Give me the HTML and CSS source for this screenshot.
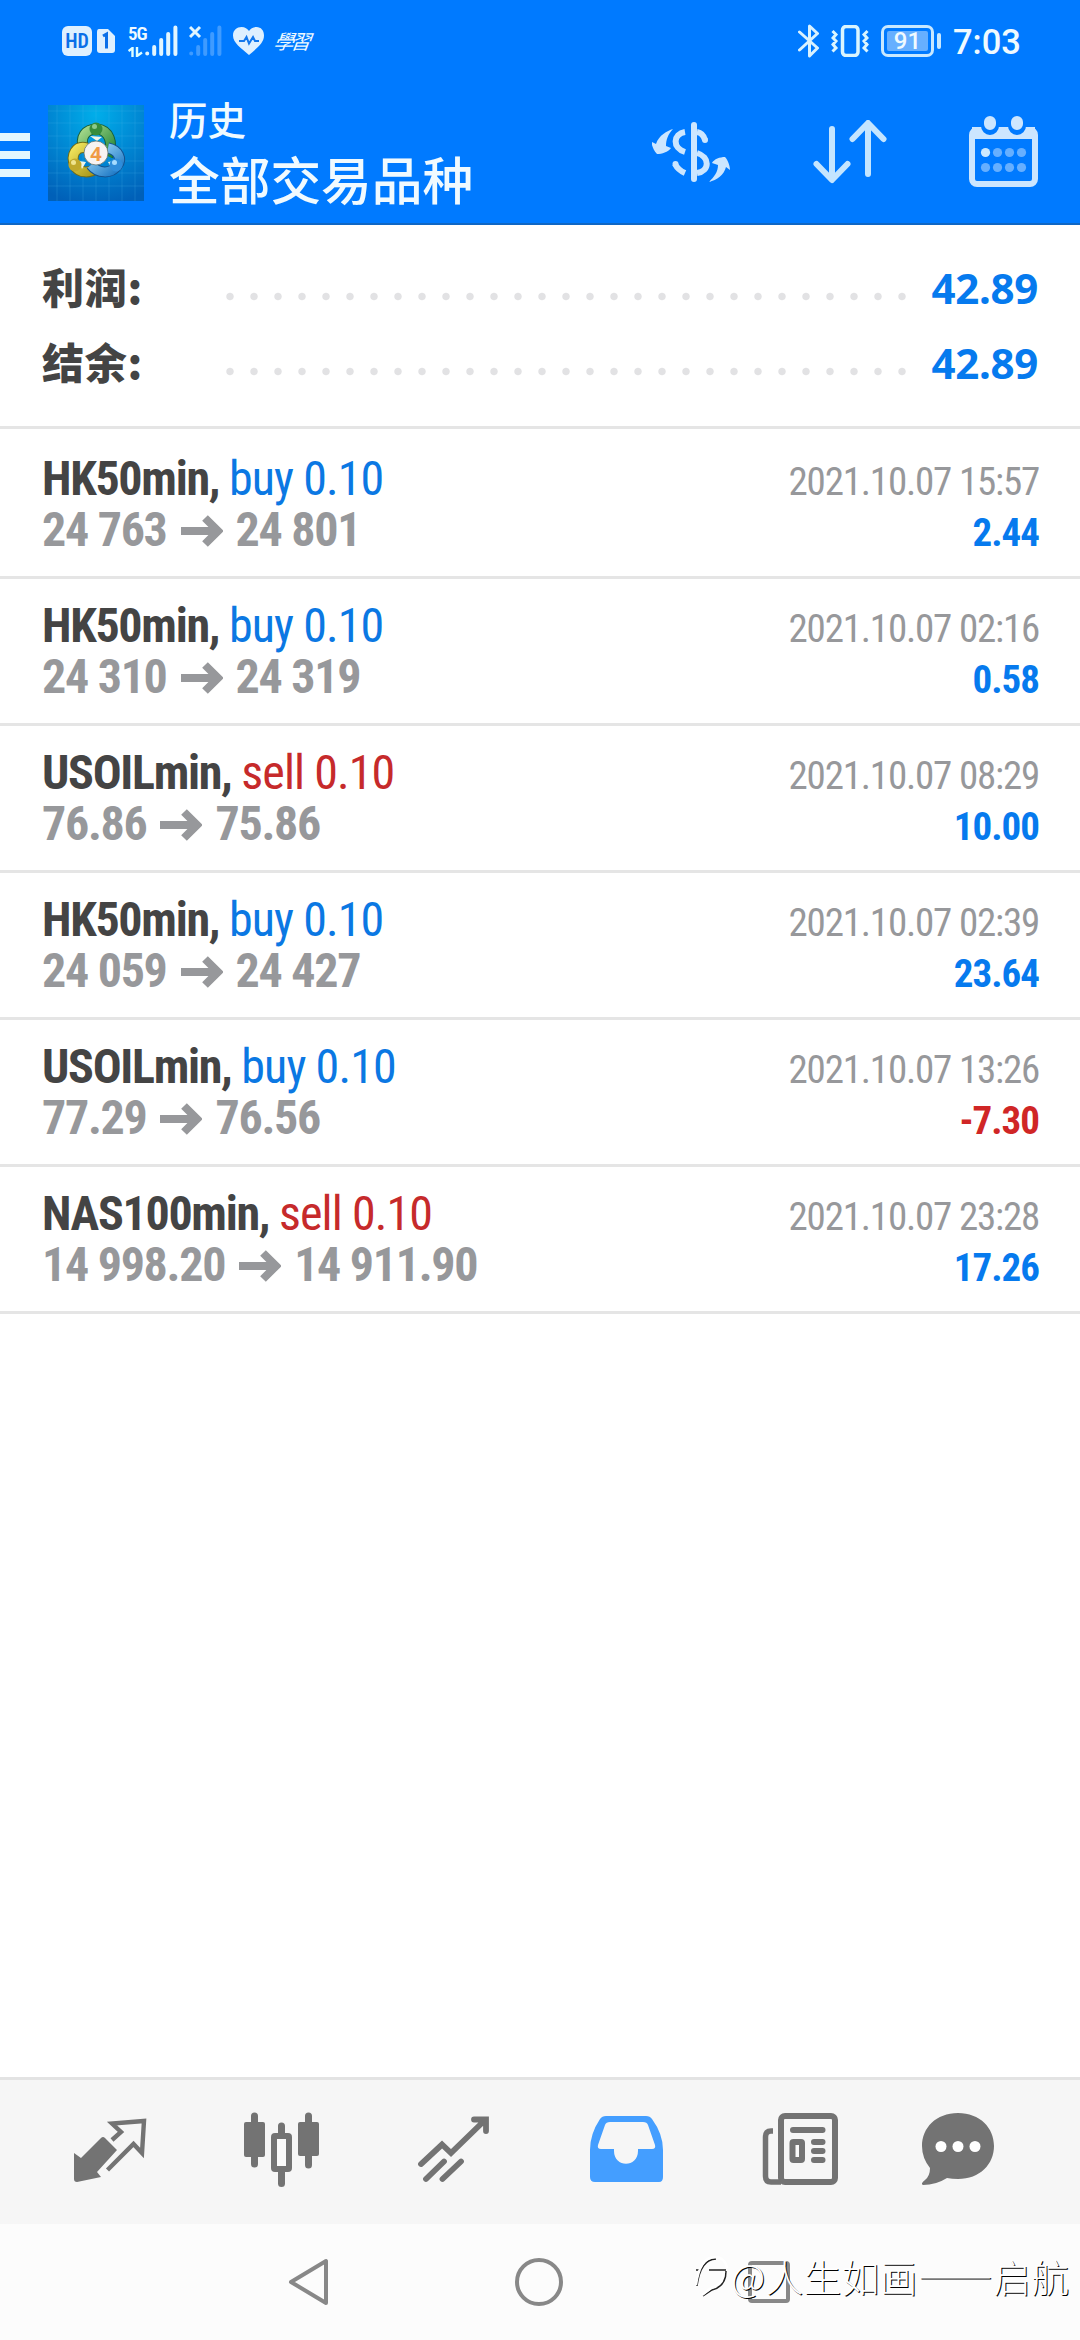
FILE: index.html
```html
<!DOCTYPE html>
<html lang="zh-CN">
<head>
<meta charset="utf-8">
<title>历史</title>
<link rel="stylesheet" href="styles.css">
</head>
<body>
<div class="screen">
  <header class="header">
    <div class="status">
      <div class="status-left">
        <span class="hd">HD</span>
        <svg class="sim" width="18" height="24" viewBox="0 0 18 24"><path d="M2 0H11L18 7V21Q18 24 15 24H3Q0 24 0 21V3Q0 0 2 0Z" fill="#def0ff"/><path d="M6 7L9.500 5V19.500" fill="none" stroke="#0a6fe8" stroke-width="3"/></svg>
        <span class="net">
          <span class="net-label">5G</span>
          <svg width="15" height="10" viewBox="0 0 15 10"><path d="M0.500 4L4.500 1V10M9 0V9L14 5.500" fill="none" stroke="#dff" stroke-width="2.400"/></svg>
        </span>
        <svg class="bars" width="33" height="32" viewBox="0 0 33 32"><path d="M2.200 28.500V28.500M9.200 29V22M16.200 29V15M23.200 29V9M30.400 29V2.500" stroke="#e2f6ff" stroke-width="4" stroke-linecap="round"/></svg>
        <svg class="bars off" width="33" height="32" viewBox="0 0 33 32"><path d="M2.200 28.500V28.500M9.200 29V22M16.200 29V15M23.200 29V9M30.400 29V2.500" stroke="#3f9bff" stroke-width="4" stroke-linecap="round"/><path d="M1 2L11 12M11 2L1 12" stroke="#e2f6ff" stroke-width="3"/></svg>
        <svg class="heart" width="32" height="28" viewBox="0 0 32 28"><path d="M16 28C8 21 0 16 0 8.500C0 3 4 0 8.500 0C12 0 14.500 1.800 16 4C17.500 1.800 20 0 23.500 0C28 0 31 3.500 31 8.500C31 16 24 21 16 28Z" fill="#def0ff"/><path d="M6 14H11L13.500 10L16 16.500L20 10L22 14H26" fill="none" stroke="#1277ec" stroke-width="2"/></svg>
        <span class="study">學習</span>
      </div>
      <div class="status-right">
        <svg width="22" height="34" viewBox="0 0 22 34"><path d="M1.500 8L19.500 24L11.500 32V2L19.500 9.500L1.500 26" fill="none" stroke="#d9f2ff" stroke-width="3" stroke-linejoin="round" stroke-linecap="round"/></svg>
        <svg class="vibrate" width="38" height="32" viewBox="0 0 38 32"><rect x="11.500" y="1.500" width="15.500" height="29" rx="3.500" fill="none" stroke="#d9f5ff" stroke-width="3.500"/><path d="M1.500 6L5 9.500L2 13L5 16L2 19.500L5 23L1.500 26.500M36.500 6L33 9.500L36 13L33 16L36 19.500L33 23L36.500 26.500" fill="none" stroke="#d9f5ff" stroke-width="3"/></svg>
        <span class="battery"><span class="level">91</span></span><i class="tip"></i>
        <span class="clock">7:03</span>
      </div>
    </div>
    <div class="toolbar">
      <svg class="menu" width="30" height="46" viewBox="0 0 30 46"><path d="M0 5H30M0 23H30M0 41H30" stroke="#e2f7ff" stroke-width="8"/></svg>
      <svg class="logo" width="96" height="96" viewBox="0 0 96 96">
        <defs>
          <radialGradient id="bg" cx="50%" cy="10%" r="95%"><stop offset="0" stop-color="#00aeea"/><stop offset=".5" stop-color="#0087d3"/><stop offset="1" stop-color="#0060b8"/></radialGradient>
          <linearGradient id="gr" x1="0" y1="0" x2="1" y2="1"><stop offset="0" stop-color="#a5d98a"/><stop offset="1" stop-color="#238537"/></linearGradient>
          <linearGradient id="ye" x1="0" y1="0" x2="1" y2="1"><stop offset="0" stop-color="#f0e35b"/><stop offset="1" stop-color="#a69416"/></linearGradient>
          <linearGradient id="bl" x1="0" y1="0" x2="1" y2="1"><stop offset="0" stop-color="#a2dcfa"/><stop offset="1" stop-color="#1a76c4"/></linearGradient>
        </defs>
        <rect width="96" height="96" fill="url(#bg)"/>
        <path d="M9 0V96M22 0V96M35 0V96M48 0V96M61 0V96M74 0V96M87 0V96M0 6H96M0 18H96M0 31H96M0 43H96M0 56H96M0 68H96M0 81H96" stroke="#4bbaf0" stroke-opacity=".22"/>
        <path d="M36 46C31 31 38 24 49 24C61 25 66 38 60 51" fill="none" stroke="#175f3b" stroke-width="11"/>
        <path d="M36 46C31 31 38 24 49 24C61 25 66 38 60 51" fill="none" stroke="url(#gr)" stroke-width="9"/>
        <path d="M39 43C28 40 22 50 27 61C32 69 42 68 50 63" fill="none" stroke="#6f6c18" stroke-width="11"/>
        <path d="M39 43C28 40 22 50 27 61C32 69 42 68 50 63" fill="none" stroke="url(#ye)" stroke-width="9"/>
        <path d="M60 43C70 45 75 54 69 61C63 69 50 69 43 60" fill="none" stroke="#135290" stroke-width="11"/>
        <path d="M60 43C70 45 75 54 69 61C63 69 50 69 43 60" fill="none" stroke="url(#bl)" stroke-width="9"/>
        <path d="M42 31L54 32L49 36ZM31 56L38 57L34 64ZM60 57L67 56L64 64Z" fill="#eef5e8"/>
        <circle cx="48" cy="24" r="6.500" fill="#368c3b"/><circle cx="46.500" cy="21.500" r="2.500" fill="#8cc98b"/>
        <circle cx="27" cy="60" r="6.500" fill="#c0a92c"/><circle cx="25.500" cy="57.500" r="2.500" fill="#efe48f"/>
        <circle cx="68" cy="60" r="6.500" fill="#2f8dda"/><circle cx="66.500" cy="57.500" r="2.500" fill="#a6dcff"/>
        <circle cx="48" cy="48" r="12" fill="#f7f3f2" stroke="#66756e" stroke-width=".8"/>
        <text x="48" y="55.500" class="logo-num">4</text>
      </svg>
      <div class="titles">
        <div class="title">历史</div>
        <div class="subtitle">全部交易品种</div>
      </div>
      <div class="actions">
        <svg width="80" height="62" viewBox="650 120 80 62"><g fill="#cce6ff"><path d="M672 128C666 130 658 134 655 143L651 141V144C652 147 653 150 656 153C661 153 667 151 670 147L665 145C665 139 667 133 672 128Z"/><path d="M708 181C716 179 723 174 725 166L729 169C729 165 727 159 724 156C719 156 713 158 711 162L717 164C717 171 713 176 708 181Z"/></g><path d="M693 124V178" stroke="#cce6ff" stroke-width="6" stroke-linecap="round"/><path d="M696 131Q702 132 704 139M684 131C672 133 671 147 684 151M696 152C709 156 709 170 696 172M684 172Q677 169 674 163" fill="none" stroke="#cce6ff" stroke-width="6"/><circle cx="704" cy="139" r="3" fill="#cce6ff"/><circle cx="674.500" cy="163" r="3" fill="#cce6ff"/></svg>
        <svg width="74" height="64" viewBox="809 121 74 64"><path d="M828 130V180M812.500 165L828 181L843.500 165M864 175V125M848.500 140L864 124L879.500 140" fill="none" stroke="#c4e5ff" stroke-width="6" stroke-linecap="round" stroke-linejoin="round"/></svg>
        <svg width="70" height="72" viewBox="968 116 70 72"><rect x="971" y="130" width="63" height="54" rx="5" fill="none" stroke="#cce6ff" stroke-width="6"/><path d="M971 127H1034V139H971Z" fill="#cce6ff"/><rect x="974" y="139" width="57" height="42" rx="5" fill="#007aff"/><path d="M989 122V126M1016 122V126" stroke="#007aff" stroke-width="18" stroke-linecap="round"/><path d="M989 122V124M1016 122V124" stroke="#cce6ff" stroke-width="12" stroke-linecap="round"/><g fill="#66afff"><circle cx="984.500" cy="152.500" r="4.600" fill="#cce9ff"/><circle cx="996.500" cy="152.500" r="4.600"/><circle cx="1008.500" cy="152.500" r="4.600"/><circle cx="1020.500" cy="152.500" r="4.600"/><circle cx="984.500" cy="167.500" r="4.600"/><circle cx="996.500" cy="167.500" r="4.600"/><circle cx="1008.500" cy="167.500" r="4.600"/><circle cx="1020.500" cy="167.500" r="4.600"/></g></svg>
      </div>
    </div>
  </header>

  <section class="summary">
    <div class="sum-row"><span class="label">利润:</span><span class="dots"></span><span class="total">42.89</span></div>
    <div class="sum-row"><span class="label">结余:</span><span class="dots"></span><span class="total">42.89</span></div>
  </section>

  <main class="deals">
    <article class="deal">
      <div class="line"><span class="symbol">HK50min, <span class="side buy">buy 0.10</span></span><time>2021.10.07 15:57</time></div>
      <div class="line"><span class="prices">24 763<svg class="arrow" viewBox="0 0 42 32"><path d="M0 16H36M24 3L37 16L24 29"/></svg>24 801</span><span class="profit">2.44</span></div>
    </article>
    <article class="deal">
      <div class="line"><span class="symbol">HK50min, <span class="side buy">buy 0.10</span></span><time>2021.10.07 02:16</time></div>
      <div class="line"><span class="prices">24 310<svg class="arrow" viewBox="0 0 42 32"><path d="M0 16H36M24 3L37 16L24 29"/></svg>24 319</span><span class="profit">0.58</span></div>
    </article>
    <article class="deal">
      <div class="line"><span class="symbol">USOILmin, <span class="side sell">sell 0.10</span></span><time>2021.10.07 08:29</time></div>
      <div class="line"><span class="prices">76.86<svg class="arrow" viewBox="0 0 42 32"><path d="M0 16H36M24 3L37 16L24 29"/></svg>75.86</span><span class="profit">10.00</span></div>
    </article>
    <article class="deal">
      <div class="line"><span class="symbol">HK50min, <span class="side buy">buy 0.10</span></span><time>2021.10.07 02:39</time></div>
      <div class="line"><span class="prices">24 059<svg class="arrow" viewBox="0 0 42 32"><path d="M0 16H36M24 3L37 16L24 29"/></svg>24 427</span><span class="profit">23.64</span></div>
    </article>
    <article class="deal">
      <div class="line"><span class="symbol">USOILmin, <span class="side buy">buy 0.10</span></span><time>2021.10.07 13:26</time></div>
      <div class="line"><span class="prices">77.29<svg class="arrow" viewBox="0 0 42 32"><path d="M0 16H36M24 3L37 16L24 29"/></svg>76.56</span><span class="profit loss">-7.30</span></div>
    </article>
    <article class="deal">
      <div class="line"><span class="symbol">NAS100min, <span class="side sell">sell 0.10</span></span><time>2021.10.07 23:28</time></div>
      <div class="line"><span class="prices">14 998.20<svg class="arrow" viewBox="0 0 42 32"><path d="M0 16H36M24 3L37 16L24 29"/></svg>14 911.90</span><span class="profit">17.26</span></div>
    </article>
  </main>

  <nav class="tabs">
    <svg viewBox="56 2108 108 84"><path d="M74 2153L81 2158L101 2138Q103 2136 105 2138L117 2150L97 2172L101 2177L77 2182Q74 2182 74 2179Z" fill="#737373"/><path d="M112 2140L121 2132L112 2123.500L144 2121L142 2153L133.500 2144L107.500 2170" fill="none" stroke="#737373" stroke-width="4.400" stroke-linejoin="miter"/></svg>
    <svg viewBox="228 2108 108 84"><g fill="#737373"><rect x="244" y="2122" width="21" height="35" rx="2"/><rect x="298" y="2122" width="21" height="34" rx="2"/></g><path d="M254.500 2116V2164M308.500 2116V2165M281.500 2126V2135M281.500 2171V2183.500" stroke="#737373" stroke-width="7" stroke-linecap="round"/><rect x="274" y="2136" width="15" height="33" rx="1" fill="#fafafa" stroke="#737373" stroke-width="6"/></svg>
    <svg viewBox="400 2108 108 84"><path d="M421 2164L442 2144.500L451 2153L484 2121M474 2119.500H486V2131M426 2179L444 2161.500M442.500 2179L461 2161.500" fill="none" stroke="#737373" stroke-width="5.800" stroke-linecap="round"/></svg>
    <svg viewBox="572 2108 108 84"><path fill-rule="evenodd" d="M606 2116H646Q650 2116 652 2119Q663 2134 663 2150V2177Q663 2182 659 2182H595Q590 2182 590 2177V2150Q590 2134 600 2119Q602 2116 606 2116ZM610 2122Q606 2122 605 2125L598 2145Q597 2149 601 2149H614V2151C614 2168 638 2168 638 2151V2149H652Q656 2149 655 2145L648 2125Q647 2122 643 2122Z" fill="#449eff"/></svg>
    <svg viewBox="744 2108 108 84"><rect x="781" y="2116" width="54" height="66" rx="4" fill="none" stroke="#737373" stroke-width="6"/><path d="M773 2131H771Q765.500 2131 765.500 2137V2176Q765.500 2182 771 2182H781" fill="none" stroke="#737373" stroke-width="5.500"/><path d="M793 2130H822.500M814 2142H822.500M814 2151H822.500M814 2160H822.500" stroke="#737373" stroke-width="6" stroke-linecap="round"/><rect x="792.500" y="2142" width="9.500" height="18" rx="1" fill="#fafafa" stroke="#737373" stroke-width="6"/></svg>
    <svg viewBox="916 2108 108 84"><path d="M958 2113C980 2113 994 2128 994 2146C994 2164 980 2179 958 2179Q952 2179 947 2178Q936 2185 923 2185Q920 2184 925 2180Q930 2176 930 2168Q922 2158 922 2146C922 2128 936 2113 958 2113Z" fill="#737373"/><g fill="#fff"><circle cx="941" cy="2146.500" r="5.500"/><circle cx="958" cy="2146.500" r="5.500"/><circle cx="975" cy="2146.500" r="5.500"/></g></svg>
  </nav>

  <footer class="sysnav">
    <svg width="48" height="52" viewBox="285 2256 48 52"><path d="M326 2261V2303L291 2282Z" fill="none" stroke="#888" stroke-width="4" stroke-linejoin="round"/></svg>
    <svg width="52" height="52" viewBox="514 2256 52 52"><circle cx="540" cy="2282" r="22" fill="none" stroke="#888" stroke-width="4"/></svg>
    <svg width="48" height="52" viewBox="745 2256 48 52"><rect x="750" y="2263" width="38" height="38" rx="2" fill="none" stroke="#888" stroke-width="4"/></svg>
  </footer>
  <div class="watermark">
    <svg width="34" height="44" viewBox="0 0 34 44"><g fill="none"><path d="M2 32C4 17 9 5 21 5M31 17C31 28 25 34 17 36L8 42M1 16H6M14 16H31" stroke="#222" stroke-width="1.500"/><path d="M1 31C3 16 8 3 20 3C26 3 31 7 32 14M29 18C28 28 22 32 16 34L7 41" stroke="#fff" stroke-width="2.500"/></g></svg>
    <span>@人生如画——启航</span>
  </div>
</div>
</body>
</html>
```
FILE: styles.css
```css
* { box-sizing: border-box; }
body { margin: 0; background: #fff; }
svg { display: block; flex: none; }

.screen {
  position: relative;
  width: 1080px;
  height: 2340px;
  display: flex;
  flex-direction: column;
  overflow: hidden;
  font-family: "Roboto Condensed", Roboto, "Noto Sans CJK SC", sans-serif;
}

/* header */
.header {
  height: 225px;
  background: #007aff;
  border-bottom: 2px solid #1067c4;
  color: #f0faff;
}
.status {
  height: 82px;
  padding: 0 61px 0 62px;
  display: flex;
  justify-content: space-between;
  align-items: center;
}
.status-left, .status-right { display: flex; align-items: center; }
.hd {
  width: 30px;
  height: 30px;
  border-radius: 6px;
  background: #def0ff;
  color: #0a6fe8;
  font: 600 20px/31px "Roboto Condensed", Roboto, sans-serif;
  text-align: center;
}
.sim { margin-left: 5px; }
.net { display: flex; flex-direction: column; margin-left: 13px; width: 17px; gap: 5px; }
.net-label { font: 600 19px/16px "Roboto Condensed", Roboto, sans-serif; letter-spacing: -1px; }
.bars { margin-top: -1px; }
.off { margin-left: 11px; }
.heart { margin-left: 11px; }
.study {
  margin-left: 9px;
  font: italic 400 20px/26px "Noto Sans CJK TC", sans-serif;
  letter-spacing: -3px;
  transform: skewX(-8deg);
}
.vibrate { margin-left: 11px; }
.battery {
  width: 53px;
  height: 32px;
  margin-left: 12px;
  padding: 3px;
  border: 3px solid #c8e8ff;
  border-radius: 7px;
}
.level {
  display: block;
  height: 20px;
  background: #66afff;
  border-radius: 2px;
  font: 500 24px/21px Roboto, sans-serif;
  text-align: center;
}
.tip { width: 4px; height: 16px; margin-left: 3px; border-radius: 2px; background: #c8e8ff; }
.clock { margin: 2px 0 0 12px; font: 500 34.5px/40px Roboto, sans-serif; width: 66px; white-space: nowrap; }

.toolbar { height: 141px; display: flex; align-items: flex-start; }
.menu { margin-top: 50px; }
.logo { margin: 23px 0 0 18px; }
.logo-num { font: 700 20px "Open Sans", sans-serif; fill: #f09a45; text-anchor: middle; }
.titles {
  margin: 11px 0 0 25px;
  font-family: "Noto Sans CJK SC", sans-serif;
  font-weight: 500;
}
.title { font-size: 38.5px; line-height: 50px; }
.subtitle { font-size: 50.7px; line-height: 70px; }
.actions {
  flex: 1;
  padding: 34px 41px 0 0;
  display: flex;
  justify-content: flex-end;
  align-items: center;
  gap: 82px;
}

/* totals */
.summary { height: 204px; padding: 24px 42px 0; border-bottom: 3px solid #e5e5e5; }
.sum-row { height: 75px; display: flex; align-items: baseline; font-size: 42px; line-height: 73px; }
.label { width: 176px; color: #444; font-family: "Noto Sans CJK SC", sans-serif; font-weight: 900; letter-spacing: .7px; }
.dots {
  width: 696px;
  height: 75px;
  align-self: flex-start;
  background: radial-gradient(circle at 12px 47.500px, #e2e2e4 3.200px, transparent 4.200px) 0 0 / 24px 75px;
}
.total { margin-left: auto; color: #067aee; font-family: "Noto Sans", sans-serif; font-weight: 700; letter-spacing: -.3px; }

/* deals */
.deals { flex: 1; padding-top: 3px; }
.deal { height: 147px; padding: 21px 42px 0; border-bottom: 3px solid #e5e5e5; }
.line { height: 51px; display: flex; justify-content: space-between; align-items: baseline; line-height: 51px; white-space: pre; }
.symbol, .prices { font-size: 48px; font-weight: 700; letter-spacing: -1.300px; }
.symbol { color: #444; }
.side { font-weight: 400; letter-spacing: -0.900px; }
.buy { color: #0b78e3; }
.sell { color: #c62a2b; }
.prices { color: #97989b; }
.arrow { display: inline-block; width: 42px; height: 32px; margin: 0 13px 0 14px; vertical-align: -1px; }
.arrow path { fill: none; stroke: #97989b; stroke-width: 8; }
time, .profit { font-size: 39px; line-height: 44px; }
time { color: #97989b; letter-spacing: -1.200px; }
.profit { color: #067aee; font-weight: 700; letter-spacing: -1px; }
.loss { color: #d02626; }
time, .profit { margin-right: -1px; }

/* bottom bars */
.tabs {
  height: 147px;
  padding: 28px 0 0 24px;
  border-top: 3px solid #e3e3e3;
  background: #f6f6f6;
  display: grid;
  grid-template-columns: repeat(6, 172px);
  justify-items: center;
}
.tabs svg { width: 108px; height: 84px; }
.sysnav {
  height: 116px;
  padding: 32px 287px 0 285px;
  background: #fcfcfc;
  display: flex;
  justify-content: space-between;
}
.watermark {
  position: absolute;
  left: 695px;
  top: 2251px;
  display: flex;
  align-items: center;
  color: #fff;
  font: 300 37.500px/50px "Noto Sans CJK SC", sans-serif;
  letter-spacing: .55px;
  text-shadow: 1px 1px 0 #000;
  white-space: nowrap;
}
.watermark span { margin-left: 2px; }
```
